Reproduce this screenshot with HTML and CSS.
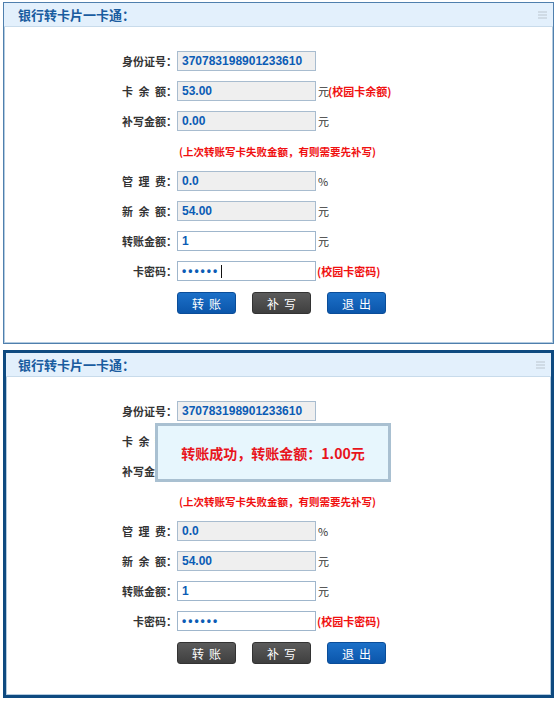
FILE: index.html
```html
<!DOCTYPE html>
<html lang="zh-CN">
<head>
    <meta charset="UTF-8">
    <meta name="viewport" content="width=device-width, initial-scale=1.0">
    <title>银行转卡片一卡通</title>
    <link rel="stylesheet" href="styles.css">
</head>
<body>

    <!-- Transfer form: editing -->
    <div class="panel">
        <div class="panel-head">
            <h2>银行转卡片一卡通：</h2>
            <svg class="menu-icon" width="9" height="8" viewBox="0 0 9 8"><path d="M0 1h9M0 4h9M0 7h9" stroke="#bcc6cf" stroke-width="1"/></svg>
        </div>
        <div class="panel-body">
            <form class="form" action="#" method="POST">
                <label class="label">身份证号：</label>
                <input class="field" type="text" value="370783198901233610" readonly>
                <span class="unit"></span>

                <label class="label spaced">卡 余 额：</label>
                <input class="field" type="text" value="53.00" readonly>
                <span class="unit">元<em class="hint">(校园卡余额)</em></span>

                <label class="label">补写金额：</label>
                <input class="field" type="text" value="0.00" readonly>
                <span class="unit">元</span>

                <p class="note">(上次转账写卡失败金额，有则需要先补写)</p>

                <label class="label spaced">管 理 费：</label>
                <input class="field" type="text" value="0.0" readonly>
                <span class="unit">%</span>

                <label class="label spaced">新 余 额：</label>
                <input class="field" type="text" value="54.00" readonly>
                <span class="unit">元</span>

                <label class="label">转账金额：</label>
                <input class="field editable" type="text" value="1">
                <span class="unit">元</span>

                <label class="label">卡密码：</label>
                <span class="field-wrap">
                    <input class="field editable" type="password" value="123456">
                    <i class="caret"></i>
                </span>
                <span class="unit"><em class="hint">(校园卡密码)</em></span>
            </form>
            <div class="actions">
                <button class="btn btn-blue" type="button">转账</button>
                <button class="btn btn-gray" type="button">补写</button>
                <button class="btn btn-blue" type="button">退出</button>
            </div>
        </div>
    </div>

    <!-- Transfer form: done, with message -->
    <div class="panel panel-active">
        <div class="panel-head">
            <h2>银行转卡片一卡通：</h2>
            <svg class="menu-icon" width="9" height="8" viewBox="0 0 9 8"><path d="M0 1h9M0 4h9M0 7h9" stroke="#bcc6cf" stroke-width="1"/></svg>
        </div>
        <div class="panel-body">
            <form class="form" action="#" method="POST">
                <label class="label">身份证号：</label>
                <input class="field" type="text" value="370783198901233610" readonly>
                <span class="unit"></span>

                <label class="label spaced">卡 余 额：</label>
                <input class="field" type="text" value="53.00" readonly>
                <span class="unit">元<em class="hint">(校园卡余额)</em></span>

                <label class="label">补写金额：</label>
                <input class="field" type="text" value="0.00" readonly>
                <span class="unit">元</span>

                <p class="note">(上次转账写卡失败金额，有则需要先补写)</p>

                <label class="label spaced">管 理 费：</label>
                <input class="field" type="text" value="0.0" readonly>
                <span class="unit">%</span>

                <label class="label spaced">新 余 额：</label>
                <input class="field" type="text" value="54.00" readonly>
                <span class="unit">元</span>

                <label class="label">转账金额：</label>
                <input class="field editable" type="text" value="1">
                <span class="unit">元</span>

                <label class="label">卡密码：</label>
                <input class="field editable" type="password" value="123456">
                <span class="unit"><em class="hint">(校园卡密码)</em></span>
            </form>
            <div class="actions">
                <button class="btn btn-gray" type="button">转账</button>
                <button class="btn btn-gray" type="button">补写</button>
                <button class="btn btn-blue" type="button">退出</button>
            </div>
        </div>

        <div class="message">转账成功，转账金额：1.00元</div>
    </div>

</body>
</html>
```

FILE: styles.css
```css
:root {
    --head-bg: #e3f0fc;
    --title-color: #1a5c9f;
    --txt-color: #333;
    --value-color: #0b5cb5;
    --red: #f01010;
}

body {
    font-family: "Noto Sans CJK SC", sans-serif;
    font-size: 12px;
    color: var(--txt-color);
    background-color: #fff;
    margin: 0;
    padding: 2px 3px 0;
}

.panel {
    position: relative;
    width: 551px;
    box-sizing: border-box;
    border: 1px solid #4f7fad;
    box-shadow: inset 0 0 0 1px #b3cbe0;
}

.panel-active {
    margin-top: 6px;
    border: 3px solid #0e4a80;
}

.panel-head {
    height: 24px;
    box-sizing: border-box;
    background-color: var(--head-bg);
    border-bottom: 1px solid #c8dbeb;
    display: flex;
    align-items: center;
    justify-content: space-between;
    padding: 0 6px 0 14px;
}

.panel-active .panel-head {
    padding-left: 12px;
}

.panel-head h2 {
    margin: 0;
    font-size: 13px;
    font-weight: bold;
    color: var(--title-color);
}

.panel-body {
    padding: 24px 0 29px;
}

.panel-active .panel-body {
    padding-bottom: 31px;
}

.form {
    margin: 0;
    display: grid;
    grid-template-columns: 173px 139px auto;
    grid-auto-rows: 20px;
    row-gap: 10px;
    align-items: center;
}

.panel-active .form {
    grid-template-columns: 171px 139px auto;
}

.label {
    text-align: right;
    font-size: 11px;
    font-weight: bold;
    color: var(--txt-color);
    white-space: nowrap;
}

.spaced {
    word-spacing: 3px;
}

.field {
    width: 139px;
    height: 20px;
    box-sizing: border-box;
    margin: 0;
    padding: 0 4px;
    border: 1px solid #a8bccf;
    border-radius: 0;
    background-color: #efefef;
    font-family: "Liberation Sans", sans-serif;
    font-size: 12px;
    font-weight: bold;
    color: var(--value-color);
    outline: none;
}

.field.editable {
    background-color: #fff;
    border-color: #9fb6cc;
}

.field[type="password"] {
    letter-spacing: 2px;
}

.field-wrap {
    position: relative;
    display: block;
    height: 20px;
}

.caret {
    position: absolute;
    left: 44px;
    top: 4px;
    width: 1px;
    height: 13px;
    background-color: #111;
}

.unit {
    padding-left: 2px;
    font-size: 11px;
    color: var(--txt-color);
    white-space: nowrap;
}

.hint {
    margin-left: -1px;
    font-style: normal;
    font-size: 11px;
    font-weight: bold;
    color: var(--red);
}

.note {
    grid-column: 2 / 4;
    margin: 0;
    padding-left: 2px;
    font-size: 10.5px;
    font-weight: bold;
    color: var(--red);
    white-space: nowrap;
}

.actions {
    display: flex;
    gap: 16px;
    margin-top: 11px;
    padding-left: 173px;
}

.panel-active .actions {
    padding-left: 171px;
}

.btn {
    width: 59px;
    height: 22px;
    padding: 0 0 0 5px;
    border-radius: 3px;
    font-family: "Noto Sans CJK SC", sans-serif;
    font-size: 12px;
    letter-spacing: 5px;
    color: #fff;
    cursor: pointer;
}

.btn-blue {
    background: linear-gradient(#1c70c8, #0b56ab);
    border: 1px solid #0a4d99;
}

.btn-gray {
    background: linear-gradient(#5b5b5b, #3f3f3f);
    border: 1px solid #333;
}

/* Result message over the form */
.message {
    position: absolute;
    left: 149px;
    top: 70px;
    width: 236px;
    height: 59px;
    box-sizing: border-box;
    border: 3px solid #a9c0d1;
    background-color: #e7f6fd;
    display: flex;
    align-items: center;
    justify-content: center;
    font-size: 14px;
    font-weight: bold;
    color: #e8141c;
}
```
